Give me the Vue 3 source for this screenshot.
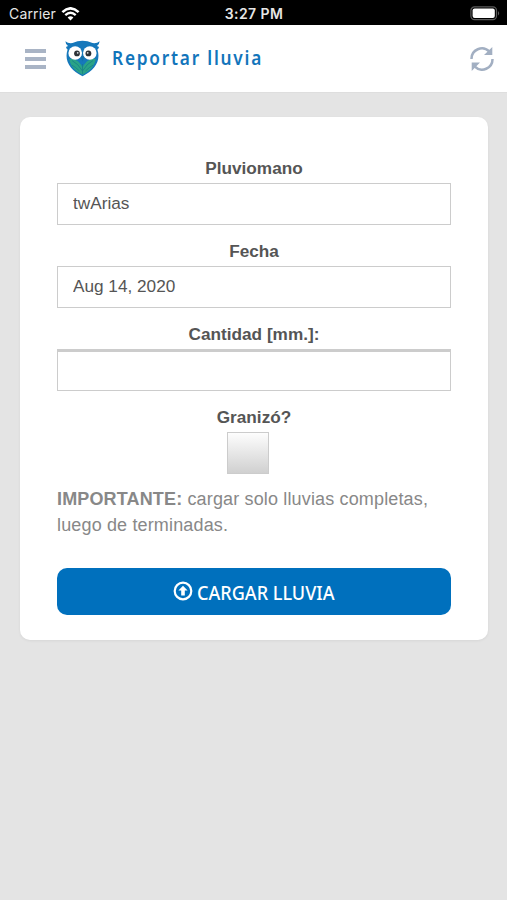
<template>
  <div class="screen">
    <!-- Barra de estado -->
    <div class="status-bar">
      <div class="status-left">
        <span class="carrier">Carrier</span>
        <svg class="wifi" width="19" height="14" viewBox="0 0 19 14">
          <path d="M1.4 5.1 Q9.5 -2.4 17.6 5.1" fill="none" stroke="#fff" stroke-width="2.6" />
          <path d="M4.3 8.1 Q9.5 3.5 14.7 8.1" fill="none" stroke="#fff" stroke-width="2.4" />
          <path d="M6.6 10.5 Q9.5 8 12.4 10.5 L9.5 13.6 Z" fill="#fff" />
        </svg>
      </div>
      <span class="clock">3:27 PM</span>
      <svg class="battery" width="31" height="15" viewBox="0 0 31 15">
        <rect x="0.9" y="0.9" width="25.6" height="12.8" rx="3.6" fill="none" stroke="#5b5b5b" stroke-width="1.2" />
        <rect x="2.6" y="2.5" width="22.2" height="9.6" rx="2" fill="#fff" />
        <path d="M28 5 Q30.4 7.3 28 9.6 Z" fill="#5b5b5b" />
      </svg>
    </div>

    <!-- Encabezado -->
    <header class="header">
      <button class="icon-button menu" aria-label="Menu">
        <span class="menu-line"></span>
        <span class="menu-line"></span>
        <span class="menu-line"></span>
      </button>
      <svg class="logo" width="35" height="37" viewBox="0 0 35 37">
        <path
          d="M0.4 1.2 Q3.2 3.7 7.5 3 Q17.5 -1.4 27.5 3 Q31.8 3.7 34.6 1.2 Q34.4 4.4 32 6.1 L34 7 Q33.4 9 32.4 9.5 C36.2 21 29.5 30.5 17.5 36.2 C5.5 30.5 -1.2 21 2.6 9.5 Q1.6 9 1 7 L3 6.1 Q0.6 4.4 0.4 1.2Z"
          fill="#1678bb"
        />
        <path
          d="M4.2 19 Q9 17.8 13.2 21.5 Q16.5 24.5 17.5 28 Q18.5 24.5 21.8 21.5 Q26 17.8 30.8 19 C29.5 26.3 25 30.8 17.5 34.8 C10 30.8 5.5 26.3 4.2 19Z"
          fill="#2aa387"
        />
        <path
          d="M17.5 34 V24 M17.5 31 Q13 23.5 7 20.5 M17.5 31 Q22 23.5 28 20.5 M14.5 31 Q10.5 27 6.8 25 M20.5 31 Q24.5 27 28.2 25"
          fill="none"
          stroke="#177f87"
          stroke-width="0.8"
        />
        <circle cx="10.2" cy="13" r="6.8" fill="#fff" />
        <circle cx="24.8" cy="13" r="6.8" fill="#fff" />
        <circle cx="12" cy="13.4" r="2.9" fill="#2d3238" />
        <circle cx="23.4" cy="13.4" r="2.9" fill="#2d3238" />
        <circle cx="12.7" cy="12.8" r="0.9" fill="#d7dde0" />
        <circle cx="22.7" cy="12.8" r="0.9" fill="#d7dde0" />
        <path d="M15.7 17 L17.5 15.5 L19.3 17 L17.5 21.4Z" fill="#146fa9" />
      </svg>
      <h1 class="title"><span>Reportar lluvia</span></h1>
      <button class="icon-button refresh" aria-label="Actualizar">
        <svg width="24" height="25" viewBox="0 0 24 25">
          <g fill="none" stroke="#a2afc2" stroke-width="2.5">
            <path d="M1.5 13 A10.4 10.4 0 0 1 19.2 5.4" />
            <path d="M22.5 13 A10.4 10.4 0 0 1 4.8 20.6" />
          </g>
          <path d="M22.3 0.9 V9 H14Z M1.7 25 V16.6 H10Z" fill="#a2afc2" />
        </svg>
      </button>
    </header>

    <main class="content">
      <form class="card" @submit.prevent>
        <div v-for="field in fields" :key="field.id" class="field">
          <label :for="field.id">{{ field.label }}</label>
          <input
            :id="field.id"
            v-model="field.value"
            type="text"
            class="text-input"
            :class="{ inset: field.inset }"
          />
        </div>

        <div class="field">
          <label for="granizo">Granizó?</label>
          <input id="granizo" v-model="granizo" type="checkbox" class="checkbox" />
        </div>

        <p class="notice">
          <strong>IMPORTANTE:</strong> cargar solo lluvias completas, luego de terminadas.
        </p>

        <button type="submit" class="submit">
          <svg class="submit-icon" width="20" height="20" viewBox="0 0 20 20">
            <circle cx="10" cy="10" r="8.3" fill="none" stroke="#fff" stroke-width="2.2" />
            <path d="M10 4.7 L14.6 9.6 H11.8 V14.6 H8.2 V9.6 H5.4Z" fill="#fff" />
          </svg>
          <span class="submit-label"><span>CARGAR LLUVIA</span></span>
        </button>
      </form>
    </main>
  </div>
</template>

<script setup>
import { ref } from 'vue'

const fields = ref([
  { id: 'pluviomano', label: 'Pluviomano', value: 'twArias' },
  { id: 'fecha', label: 'Fecha', value: 'Aug 14, 2020' },
  { id: 'cantidad', label: 'Cantidad [mm.]:', value: '', inset: true }
])

const granizo = ref(false)
</script>

<style>
body {
  margin: 0;
  background: #e4e4e4;
}
</style>

<style scoped>
.screen {
  display: flex;
  flex-direction: column;
  height: 900px;
  overflow: hidden;
  background: #e4e4e4;
  font-family: "Liberation Sans", Arial, sans-serif;
}

.status-bar {
  display: grid;
  grid-template-columns: 1fr auto 1fr;
  align-items: center;
  box-sizing: border-box;
  height: 25px;
  padding: 2px 6px 0 9px;
  background: #000;
  color: #e6e6e6;
  font-family: Inter, sans-serif;
  font-size: 14px;
}

.status-left {
  display: flex;
  align-items: center;
  gap: 5px;
}

.carrier {
  letter-spacing: 0.15px;
}

.clock {
  margin-right: 2px;
  font-size: 14px;
  font-weight: 600;
  letter-spacing: 0.4px;
}

.battery {
  justify-self: end;
}

.header {
  display: flex;
  align-items: center;
  box-sizing: border-box;
  height: 68px;
  padding: 0 13px 0 25px;
  background: #fff;
  border-bottom: 1px solid #dedede;
}

.icon-button {
  padding: 0;
  border: 0;
  background: none;
}

.menu {
  display: flex;
  flex-direction: column;
  gap: 4px;
  width: 21px;
}

.menu-line {
  height: 4px;
  background: #a9b4c5;
}

.logo {
  margin-left: 19px;
}

.title {
  width: 156px;
  margin: -2px 0 0 12px;
  color: #1275bb;
  font-family: "Noto Sans", sans-serif;
  font-size: 19.5px;
  font-weight: 600;
  line-height: 28px;
  letter-spacing: 2px;
  white-space: nowrap;
}

/* letra angosta */
.title span {
  display: inline-block;
  transform: scaleX(0.886);
  transform-origin: left;
}

.refresh {
  display: flex;
  margin-left: auto;
}

.content {
  padding: 24px 19px 0 20px;
}

.card {
  box-sizing: border-box;
  height: 523px;
  padding: 40px 37px 0;
  background: #fff;
  border-radius: 10px;
  box-shadow: 0 1px 3px rgba(0, 0, 0, 0.06);
}

.field {
  display: flex;
  flex-direction: column;
  align-items: center;
  margin-bottom: 15px;
}

.field label {
  height: 26px;
  color: #555;
  font-size: 17.2px;
  font-weight: bold;
  line-height: 22px;
}

.text-input {
  box-sizing: border-box;
  width: 100%;
  height: 42px;
  padding: 0 15px 1px;
  border: 1px solid #ccc;
  border-radius: 0;
  outline: none;
  background: #fff;
  color: #555;
  font-family: inherit;
  font-size: 17.2px;
}

.text-input.inset {
  border-top: 3px solid #ccc;
}

.checkbox {
  width: 42px;
  height: 42px;
  box-sizing: border-box;
  margin: 0 12px 0 0;
  border: 1px solid #ccc;
  appearance: none;
  background: linear-gradient(#fdfdfd, #d0d0d0);
}

.notice {
  margin: -3px 0 0;
  color: #888;
  font-size: 18px;
  line-height: 26px;
  letter-spacing: 0.15px;
}

.submit {
  display: flex;
  align-items: center;
  justify-content: center;
  gap: 4px;
  width: 100%;
  height: 47px;
  margin-top: 30px;
  padding: 0;
  border: 0;
  border-radius: 10px;
  background: #0070bd;
  color: #fff;
}

.submit-icon {
  margin-top: -1px;
}

.submit-label {
  width: 138px;
  margin-top: 2px;
  font-family: "Noto Sans", sans-serif;
  font-size: 19px;
  font-weight: 500;
  line-height: 28px;
  text-align: left;
  white-space: nowrap;
}

.submit-label span {
  display: inline-block;
  transform: scaleX(0.95);
  transform-origin: left;
}
</style>
